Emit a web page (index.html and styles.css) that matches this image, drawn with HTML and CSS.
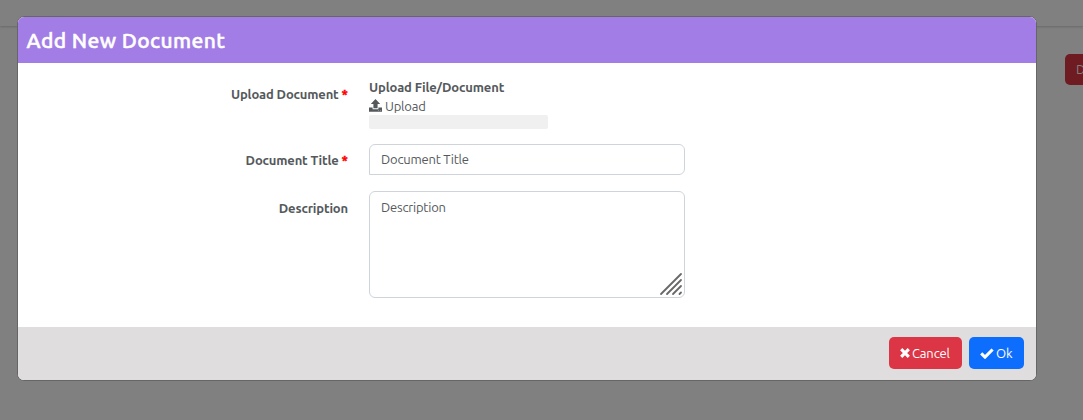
FILE: index.html
```html
<!DOCTYPE html>
<html lang="en">
<head>
<meta charset="utf-8">
<title>Add New Document</title>
<link rel="stylesheet" href="styles.css">
</head>
<body>
<div class="topbar"></div>
<div class="page-button">D</div>
<main class="modal">
  <header class="modal-header"><h1 class="modal-title">Add New Document</h1></header>
  <form class="modal-body">
    <div class="label label-upload"><span>Upload Document</span><span class="required">*</span></div>
    <div class="upload">
      <div class="upload-heading">Upload File/Document</div>
      <div class="upload-action">
        <svg class="upload-icon" viewBox="0 0 13 13"><path d="M6.500 0 11.200 5H8.600V9.200H4.400V5H1.800Z"/><path d="M0 8.500H3.600V10.200H9.400V8.500H13V12.800H0Z"/><path d="M9 11.500h.6M11 11.500h.6" stroke="#fff" stroke-width=".5"/></svg>
        <span>Upload</span>
      </div>
      <div class="progress"></div>
    </div>
    <div class="label label-title"><span>Document Title</span><span class="required">*</span></div>
    <div class="field field-title">Document Title</div>
    <div class="label label-desc"><span>Description</span></div>
    <div class="field field-desc">Description
      <svg class="grip" viewBox="0 0 24 24"><path d="M2 22 22 2M8 22 22 8M14 22 22 14M20.500 22 22 20.500"/></svg>
    </div>
  </form>
  <footer class="modal-footer">
    <button class="btn btn-cancel" type="button"><svg class="x-icon" viewBox="0 0 10 10"><path d="M1.200 1.200 8.800 8.800M8.800 1.200 1.200 8.800"/></svg><span>Cancel</span></button>
    <button class="btn btn-ok" type="button"><svg class="check-icon" viewBox="0 0 14 11"><path d="M1.200 5.400 5 9.100 12.600 1.500"/></svg><span>Ok</span></button>
  </footer>
</main>
</body>
</html>
```
FILE: styles.css
```css
* { box-sizing: border-box; }
body {
  margin: 0;
  height: 420px;
  padding: 16px 0 0 17px;
  overflow: hidden;
  position: relative;
  background: #808080;
  color: #55595c;
  font: 13px/20px Ubuntu, "Noto Sans", sans-serif;
}
.topbar {
  position: absolute;
  inset: 0 0 auto;
  height: 26px;
  box-shadow: 0 1px 2px #686868;
}
.page-button {
  position: absolute;
  left: 1065px;
  top: 54px;
  width: 50px;
  height: 31px;
  padding: 5px 11px;
  border-radius: 5px;
  background: #6e1b22;
  color: #808080;
}
.modal {
  position: relative;
  width: 1020px;
  height: 365px;
  border: 1px solid #666;
  border-radius: 7px;
  background: #fff;
  overflow: hidden;
}
.modal-header {
  height: 46px;
  padding: 9px 8.5px;
  background: #a27de6;
}
.modal-title {
  margin: 0;
  color: #fff;
  font-size: 21px;
  font-weight: 500;
  line-height: 29px;
  letter-spacing: .4px;
  -webkit-text-stroke: .5px #fff;
  white-space: nowrap;
}
.modal-body {
  height: 264px;
  padding-top: 14px;
  display: grid;
  grid-template-columns: 330px 316px;
  grid-template-rows: 67px 47px 107px;
  column-gap: 21px;
}
.label {
  display: flex;
  justify-content: flex-end;
  gap: 3px;
  font-weight: 700;
  letter-spacing: -.15px;
  white-space: nowrap;
}
.label-upload { padding-top: 7px; }
.label-title { padding-top: 6px; }
.label-desc { padding-top: 7px; }
.required { color: #f00; letter-spacing: 0; -webkit-text-stroke: .4px #f00; }
.upload-heading {
  height: 20px;
  font-weight: 700;
  letter-spacing: -.12px;
}
.upload-action {
  display: flex;
  gap: 3px;
  height: 18px;
  line-height: 18px;
  letter-spacing: -.2px;
}
.upload-icon {
  width: 13px;
  height: 13px;
  margin-top: 2px;
  fill: #55595c;
}
.progress {
  width: 179px;
  height: 14px;
  border-radius: 2px;
  background: #f0f0f0;
}
.field {
  position: relative;
  border: 1px solid #ced4da;
  border-radius: 6px;
  padding: 4px 11px;
  letter-spacing: -.2px;
}
.field-title { height: 31px; border-bottom-left-radius: 0; }
.field-desc { height: 107px; padding-top: 5px; }
.grip {
  position: absolute;
  right: 1px;
  bottom: 1px;
  width: 24px;
  height: 24px;
  stroke: #686868;
  stroke-width: 1.8;
  stroke-linecap: round;
}
.modal-footer {
  height: 53px;
  padding: 10px 12px;
  display: flex;
  justify-content: flex-end;
  gap: 7px;
  background: #dfdddd;
}
.btn {
  display: flex;
  align-items: center;
  height: 32px;
  padding: 0 11px;
  border: 0;
  border-radius: 5px;
  color: #fff;
  font: inherit;
  letter-spacing: -.15px;
}
.btn-cancel { width: 73px; gap: 2px; background: #dc3545; }
.btn-ok { width: 55px; gap: 2px; background: #0d6efd; }
.x-icon { width: 10px; height: 10px; flex: none; }
.check-icon { width: 14px; height: 11px; flex: none; }
.btn path { fill: none; stroke: #fff; stroke-width: 3.1; }
```
